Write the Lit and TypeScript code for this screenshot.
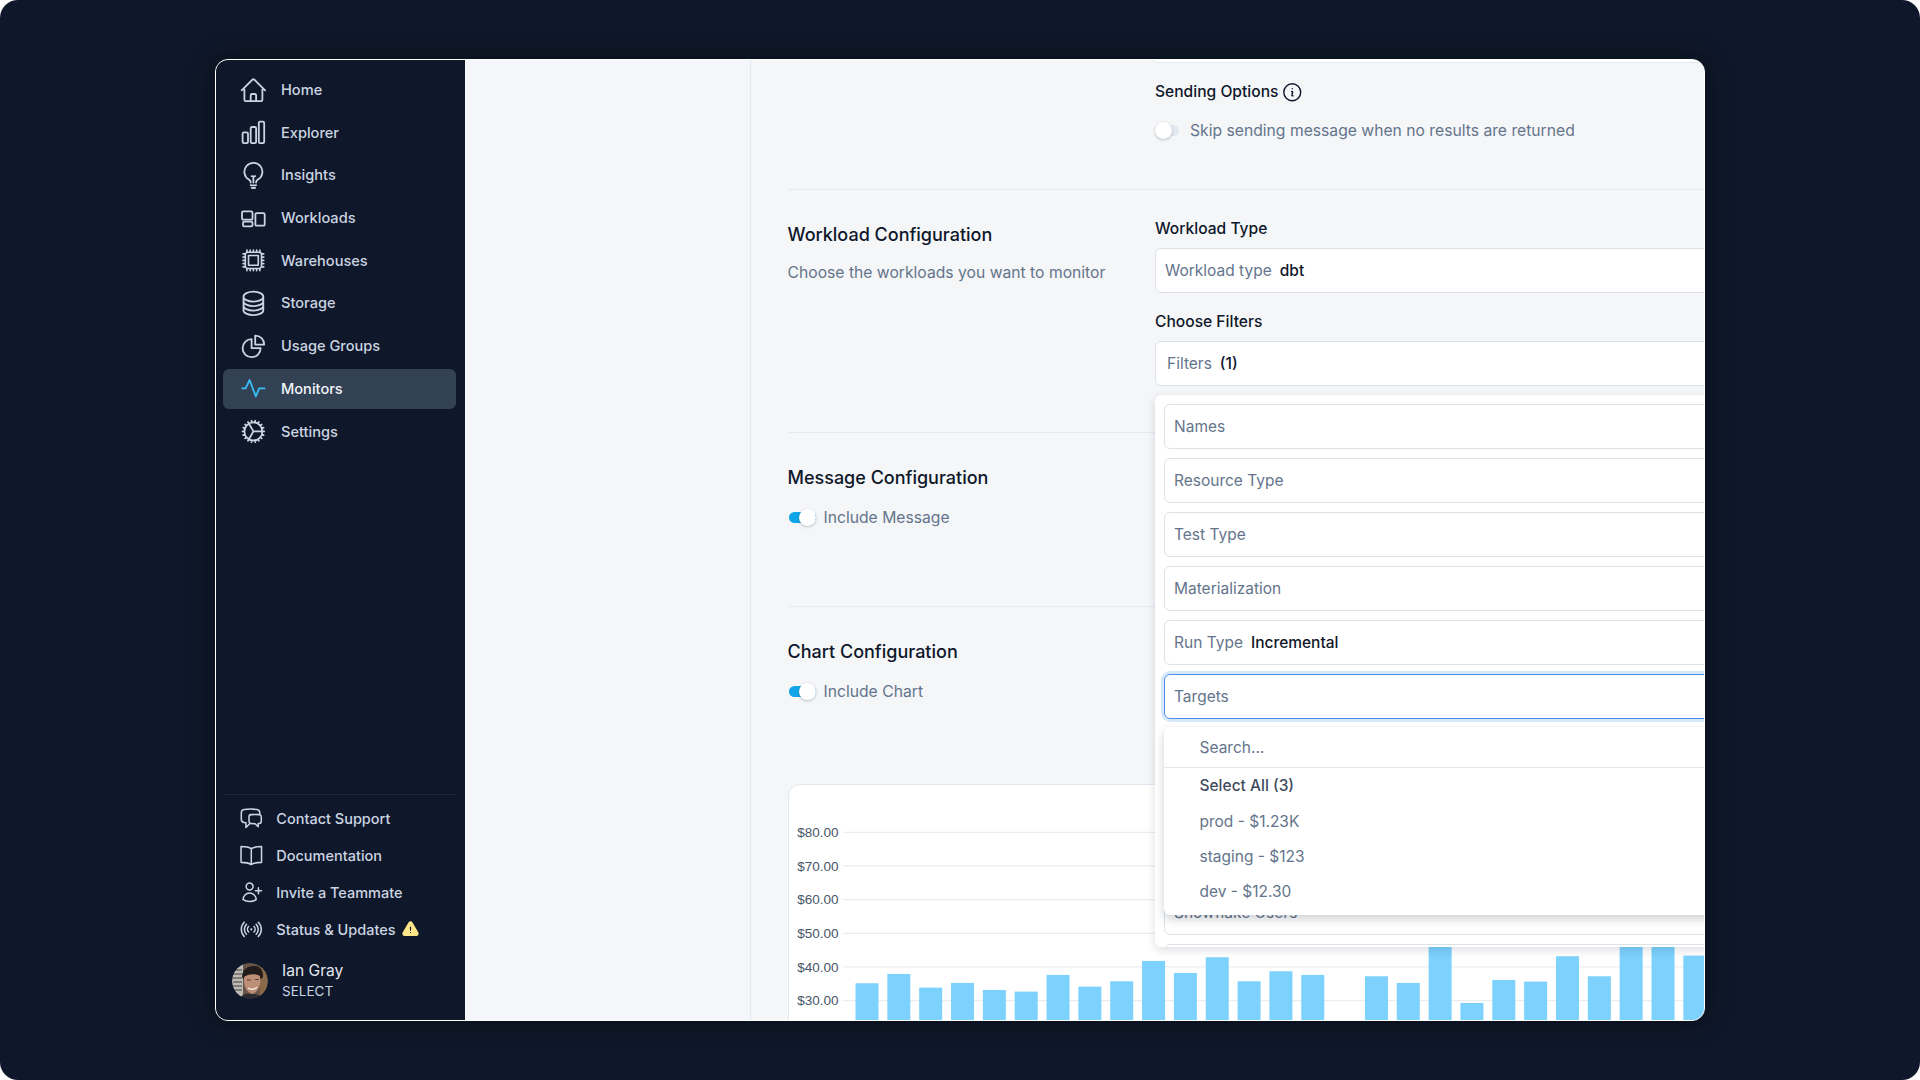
import { LitElement, html, css, svg } from "lit";
import { customElement } from "lit/decorators.js";

const P = (d: string) => svg`<path d=${d}></path>`;
const NAV_ICONS: Record<string, unknown> = {
  Home: P("M2.25 12l8.954-8.955a1.126 1.126 0 011.591 0L21.75 12M4.5 9.75v10.125c0 .621.504 1.125 1.125 1.125H9.75v-4.875c0-.621.504-1.125 1.125-1.125h2.25c.621 0 1.125.504 1.125 1.125V21h4.125c.621 0 1.125-.504 1.125-1.125V9.75M8.25 21h8.25"),
  Explorer: P("M3 13.125C3 12.504 3.504 12 4.125 12h2.25c.621 0 1.125.504 1.125 1.125v6.75C7.5 20.496 6.996 21 6.375 21h-2.25A1.125 1.125 0 013 19.875v-6.75zM9.75 8.625c0-.621.504-1.125 1.125-1.125h2.25c.621 0 1.125.504 1.125 1.125v11.25c0 .621-.504 1.125-1.125 1.125h-2.25a1.125 1.125 0 01-1.125-1.125V8.625zM16.5 4.125c0-.621.504-1.125 1.125-1.125h2.25C20.496 3 21 3.504 21 4.125v15.75c0 .621-.504 1.125-1.125 1.125h-2.25a1.125 1.125 0 01-1.125-1.125V4.125z"),
  Insights: P("M12 18v-5.25m0 0a6.01 6.01 0 001.5-.189m-1.5.189a6.01 6.01 0 01-1.5-.189m3.75 7.478a12.06 12.06 0 01-4.5 0m3.75 2.383a14.406 14.406 0 01-3 0M14.25 18v-.192c0-.983.658-1.823 1.508-2.316a7.5 7.5 0 10-7.517 0c.85.493 1.509 1.333 1.509 2.316V18"),
  Workloads: svg`<g transform="translate(2 2) scale(.8333)" stroke-width="1.8"><rect x="0.6" y="5" width="10.5" height="8.3" rx="1.3"></rect><rect x="1.6" y="15.3" width="9.5" height="4.7" rx="1.3"></rect><rect x="14" y="6.7" width="9.3" height="12.6" rx="1.3"></rect></g>`,
  Warehouses: svg`<g transform="translate(1.2 1.2) scale(.9)" stroke-width="1.5"><path d="M6 2.4v2.1M9 2.4v2.1M12 2.4v2.1M15 2.4v2.1M18 2.4v2.1M6 19.5v2.1M9 19.5v2.1M12 19.5v2.1M15 19.5v2.1M18 19.5v2.1M2.4 6h2.1M2.4 9h2.1M2.4 12h2.1M2.4 15h2.1M2.4 18h2.1M19.5 6h2.1M19.5 9h2.1M19.5 12h2.1M19.5 15h2.1M19.5 18h2.1M6.75 19.5h10.5a2.25 2.25 0 002.25-2.25V6.75a2.25 2.25 0 00-2.25-2.25H6.75A2.25 2.25 0 004.5 6.75v10.5a2.25 2.25 0 002.25 2.25zM7.5 7.5h9v9h-9v-9z"></path></g>`,
  Storage: P("M20.25 6.375c0 2.278-3.694 4.125-8.25 4.125S3.75 8.653 3.75 6.375m16.5 0c0-2.278-3.694-4.125-8.25-4.125S3.75 4.097 3.75 6.375m16.5 0v11.25c0 2.278-3.694 4.125-8.25 4.125s-8.25-1.847-8.25-4.125V6.375m16.5 0v3.75m-16.5-3.75v3.75m16.5 0v3.75C20.25 16.153 16.556 18 12 18s-8.25-1.847-8.25-4.125v-3.75m16.5 0c0 2.278-3.694 4.125-8.25 4.125s-8.25-1.847-8.25-4.125"),
  "Usage Groups": svg`<path d="M10.5 6a7.5 7.5 0 107.5 7.5h-7.5V6z"></path><path d="M13.5 10.5H21A7.5 7.5 0 0013.5 3v7.5z"></path>`,
  Monitors: svg`<g transform="translate(2 2) scale(.8333)" stroke-width="1.8"><path d="M.8 12H4.2L8.2 3.6 14.4 20 17.8 12H23.2"></path></g>`,
  Settings: P("M4.5 12a7.5 7.5 0 0015 0m-15 0a7.5 7.5 0 1115 0m-15 0H3m16.5 0H21m-1.5 0H12m-8.457 3.077l1.41-.513m14.095-5.13l1.41-.513M5.106 17.785l1.15-.964m11.49-9.642l1.149-.964M7.501 19.795l.75-1.3m7.5-12.99l.75-1.3m-6.063 16.658l.26-1.477m2.605-14.772l.26-1.477m0 17.726l-.26-1.477M10.698 4.614l-.26-1.477M16.5 19.794l-.75-1.299M7.5 4.205L12 12m6.894 5.785l-1.149-.964M6.256 7.178l-1.15-.964m15.352 8.864l-1.41-.513M4.954 9.435l-1.41-.514M12.002 12l-3.75 6.495"),
};
const FOOT_ICONS: Record<string, unknown> = {
  "Contact Support": P("M20.25 8.511c.884.284 1.5 1.128 1.5 2.097v4.286c0 1.136-.847 2.1-1.98 2.193-.34.027-.68.052-1.02.072v3.091l-3-3c-1.354 0-2.694-.055-4.02-.163a2.115 2.115 0 01-.825-.242m9.345-8.334a2.126 2.126 0 00-.476-.095 48.64 48.64 0 00-8.048 0c-1.131.094-1.976 1.057-1.976 2.192v4.286c0 .837.46 1.58 1.155 1.951m9.345-8.334V6.637c0-1.621-1.152-3.026-2.76-3.235A48.455 48.455 0 0011.25 3c-2.115 0-4.198.137-6.24.402-1.608.209-2.76 1.614-2.76 3.235v6.226c0 1.621 1.152 3.026 2.76 3.235.577.075 1.157.14 1.74.194V21l4.155-4.155"),
  Documentation: P("M12 5.6C10 4.1 6 3.4 2 3.4v15.5c4.2 0 7.4.5 10 2.1 2.6-1.6 5.8-2.1 10-2.1V3.4c-4 0-8 .7-10 2.2zM12 5.6V21"),
  "Invite a Teammate": P("M19 7.5v3m0 0v3m0-3h3m-3 0h-3m-2.25-4.125a3.375 3.375 0 11-6.75 0 3.375 3.375 0 016.75 0zM4 19.235v-.11a6.375 6.375 0 0112.75 0v.109A12.318 12.318 0 0110.374 21c-2.331 0-4.512-.645-6.374-1.766z"),
  "Status & Updates": P("M9.348 14.651a3.75 3.75 0 010-5.303m5.304 0a3.75 3.75 0 010 5.303m-7.425 2.122a6.75 6.75 0 010-9.546m9.546 0a6.75 6.75 0 010 9.546M5.106 18.894c-3.808-3.808-3.808-9.98 0-13.789m13.788 0c3.808 3.808 3.808 9.981 0 13.79M12 12h.008v.007H12V12zm.375 0a.375.375 0 11-.75 0 .375.375 0 01.75 0z"),
};

const BAR_TOPS: (number | null)[] = [761, 733, 774, 760, 781, 786, 736, 771, 755, 694, 730, 683, 755, 725, 736, null, 740, 760, 600, 820, 751, 756, 680, 740, 600, 600, 678];
const TICKS = [["$80.00", 832.7], ["$70.00", 866.3], ["$60.00", 900], ["$50.00", 933.7], ["$40.00", 967.3], ["$30.00", 1001]] as const;
const CARD_X = 788.5;
const CARD_Y = 785.4;

@customElement("app-root")
export class AppRoot extends LitElement {
  static styles = css`
    :host { display: block; width: 1920px; height: 1080px; font-family: Inter, "Noto Sans", sans-serif; background: #fff; }
    * { box-sizing: border-box; }
    .frame { width: 1920px; height: 1080px; border-radius: 18px; background: #0f182a; padding: 59px 215px; overflow: hidden; }
    .win { display: flex; width: 100%; height: 100%; border: 1px solid #fff; border-radius: 13px; overflow: hidden; box-shadow: 0 0 26px rgba(0, 0, 0, .5); background: #f4f6f8; }
    .side { flex: 0 0 249px; background: #0f172a; display: flex; flex-direction: column; padding: 10px 9px 0 6.5px; }
    .nav { display: flex; flex-direction: column; gap: 2.7px; }
    .item { display: flex; align-items: center; gap: 13.1px; height: 40px; padding-left: 16.6px; border-radius: 6px; color: #cbd5e1; font-size: 14.6px; font-weight: 500; }
    .item.active { background: #334155; color: #f1f5f9; }
    .ic { fill: none; stroke: currentColor; stroke-width: 1.5; stroke-linecap: round; stroke-linejoin: round; flex: none; }
    .item .ic { width: 28.8px; height: 28.8px; }
    .item.active .ic { stroke: #38bdf8; }
    .foot { margin-top: auto; border-top: 1.5px solid #1e293b; padding-top: 5.2px; }
    .fitem { display: flex; align-items: center; gap: 12.3px; height: 37px; padding-left: 16.9px; color: #cbd5e1; font-size: 14.5px; font-weight: 500; }
    .fitem .ic { width: 24.6px; height: 24.6px; }
    .warn { width: 19px; height: 19px; margin-left: -6.5px; fill: #fde68a; }
    .user { display: flex; align-items: center; gap: 14px; padding: 13.3px 0 19px 9.5px; }
    .avatar { width: 36px; height: 36px; border-radius: 50%; flex: none; }
    .uname { color: #e2e8f0; font-size: 15.6px; line-height: 20px; font-weight: 400; }
    .urole { color: #cbd5e1; font-size: 13.5px; line-height: 19px; margin-top: 1px; }
    .pane { flex: 0 0 286px; background: #f5f6fa; border-right: 1px solid #e2e8f0; }
    .main { flex: 1; min-width: 0; overflow: hidden; padding-left: 36.5px; background: #f4f6f8; }
    .content { width: 1100px; }
    .sec { display: grid; grid-template-columns: 367.5px 1fr; border-top: 1px solid #e6eaef; }
    .sec.first { border-top: 0; padding-bottom: 48.7px; }
    .sec.work { padding-top: 28px; padding-bottom: 45.3px; }
    .sec.msg { height: 174px; padding-top: 33px; }
    .sec.chart { padding-top: 33px; }
    .stub { height: 2.6px; background: #fff; border-bottom: 1px solid #e2e8f0; border-radius: 0 0 6px 6px; }
    .label { display: flex; align-items: center; gap: 3px; height: 20px; color: #0f172a; font-size: 15.6px; font-weight: 500; }
    .label .ic { width: 22.5px; height: 22.5px; }
    .send { margin-top: 19.2px; }
    .h { color: #0f172a; font-size: 18px; line-height: 24px; font-weight: 500; }
    .work .h { margin-top: 5px; }
    .desc { margin-top: 16px; color: #64748b; font-size: 15.7px; line-height: 20px; }
    .tog-row { display: flex; align-items: center; gap: 8px; height: 20px; margin-top: 18px; color: #64748b; font-size: 15.7px; }
    .send + .tog-row { margin-top: 19px; }
    .tog { position: relative; width: 27px; height: 11px; margin-left: 1px; border-radius: 6px; background: #0ea5e9; flex: none; }
    .tog::after { content: ""; position: absolute; right: 0; top: -3px; width: 17px; height: 17px; border-radius: 50%; background: #fff; box-shadow: 0 1px 3px rgba(15, 23, 42, .25); }
    .tog.off { width: 24px; margin-left: 0; background: #e2e8f0; }
    .tog.off::after { left: 0; right: auto; }
    .off-row { gap: 11px; }
    .field { display: flex; align-items: center; gap: 8px; height: 45px; padding-left: 9px; background: #fff; border: 1px solid #dde2e9; border-radius: 6px; color: #64748b; font-size: 15.5px; }
    .field b { color: #0f172a; font-weight: 500; }
    .fwrap { position: relative; }
    .f2 { margin-top: 9.8px; }
    .cf { margin-top: 18.3px; }
    .filters { padding-left: 11px; }
    .pop { position: absolute; z-index: 5; left: 0; right: 0; top: calc(100% + 8.6px); height: 552.3px; overflow: hidden; padding: 9.3px 0 0 9px; background: #fff; border-radius: 6px; box-shadow: 0 3px 10px rgba(15, 23, 42, .14); display: flex; flex-direction: column; gap: 9px; }
    .pop .field { flex: none; }
    .targets { position: relative; flex: none; }
    .targets .field { border-color: #4f8fe8; box-shadow: 0 0 0 3px #d8e8fb; }
    .dd { position: absolute; z-index: 6; left: 0; right: 0; top: 53px; height: 188px; background: #fff; border-radius: 6px; box-shadow: 0 4px 10px rgba(15, 23, 42, .2); font-size: 15.5px; color: #64748b; }
    .search { display: flex; align-items: center; height: 41px; padding-left: 35.5px; border-bottom: 1.5px solid #e2e8f0; }
    .opt { display: flex; align-items: center; height: 35.3px; padding-left: 35.5px; }
    .opt.all { color: #3f4c60; font-weight: 500; }
    .card { grid-column: 1 / -1; margin-top: 82.5px; height: 320px; background: #fff; border: 1px solid #e2e8f0; border-radius: 12px; }
    .card svg { display: block; }
    .tick { font-family: "Liberation Sans", Arial, sans-serif; font-size: 13.5px; fill: #475569; }
  `;

  private avatar() {
    return html`<svg class="avatar" viewBox="0 0 36 36">
      <defs>
        <clipPath id="av"><circle cx="18" cy="18" r="18"></circle></clipPath>
        <filter id="soft"><feGaussianBlur stdDeviation=".6"></feGaussianBlur></filter>
      </defs>
      <g clip-path="url(#av)"><g filter="url(#soft)">
        <rect width="36" height="36" fill="#6b5448"></rect>
        <rect width="11" height="36" fill="#bdbab4"></rect>
        <path d="M1 7h9M1 11h9M1 15h9M1 19h9M1 23h9M1 27h9" stroke="#6e6a66" stroke-width="1.4"></path>
        <rect x="28" y="0" width="8" height="36" fill="#8a6a48"></rect>
        <path d="M10 14C10 5 17 3 23 3c6 0 8 5 8 11l-2 2-17 1z" fill="#241c1a"></path>
        <path d="M12 14c3-3 12-4 16-1 1 7 0 14-7 18-6-1-10-8-9-17z" fill="#bd8f76"></path>
        <path d="M15 17h4M23 16.5h3.6" stroke="#5a4034" stroke-width="1.1"></path>
        <path d="M16 25c3 2 7 1.5 9-.8" stroke="#f1e6dc" stroke-width="1.5" fill="none"></path>
        <path d="M8 36c1-4 5-6 10-5 6 0 11 1 12 5z" fill="#2a2a30"></path>
      </g></g>
    </svg>`;
  }

  private chart() {
    const rows = TICKS.map(([t, y]) => svg`
      <text class="tick" x=${796.7 - CARD_X} y=${y - CARD_Y + 4.8}>${t}</text>
      <line x1=${842.6 - CARD_X} x2="1100" y1=${y - CARD_Y} y2=${y - CARD_Y} stroke="#e9edf2" stroke-width="1.2"></line>`);
    const bars = BAR_TOPS.map((top, i) => {
      if (top === null) return null;
      const y = 730 + top / 3 - CARD_Y;
      return svg`<rect x=${855 - CARD_X + i * 31.84} y=${y} width="23" height=${300 - y} fill="#7dd1fd"></rect>`;
    });
    return html`<svg width="1098" height="300" viewBox="0 0 1098 300">${rows}${bars}</svg>`;
  }

  render() {
    const names = Object.keys(NAV_ICONS);
    return html`<div class="frame"><div class="win">
      <aside class="side">
        <nav class="nav">
          ${names.map((n) => html`<div class="item ${n === "Monitors" ? "active" : ""}">
            <svg class="ic" viewBox="0 0 24 24">${NAV_ICONS[n]}</svg><span>${n}</span></div>`)}
        </nav>
        <div class="foot">
          ${Object.keys(FOOT_ICONS).map((n) => html`<div class="fitem">
            <svg class="ic" viewBox="0 0 24 24">${FOOT_ICONS[n]}</svg><span>${n}</span>
            ${n === "Status & Updates" ? html`<svg class="warn" viewBox="0 0 24 24"><path fill-rule="evenodd" d="M9.401 3.003c1.155-2 4.043-2.001 5.197 0l7.355 12.748c1.154 2-.29 4.5-2.599 4.5H4.645c-2.309 0-3.752-2.5-2.598-4.5L9.4 3.003zM12 8.25a.75.75 0 01.75.75v3.75a.75.75 0 01-1.5 0V9a.75.75 0 01.75-.75zm0 8.25a.75.75 0 100-1.5.75.75 0 000 1.5z"></path></svg>` : ""}
          </div>`)}
          <div class="user">${this.avatar()}<div><div class="uname">Ian Gray</div><div class="urole">SELECT</div></div></div>
        </div>
      </aside>
      <div class="pane"></div>
      <main class="main"><div class="content">
        <section class="sec first">
          <div></div>
          <div>
            <div class="stub"></div>
            <div class="label send">Sending Options
              <svg class="ic" viewBox="0 0 24 24"><path d="M11.25 11.25l.041-.02a.75.75 0 011.063.852l-.708 2.836a.75.75 0 001.063.853l.041-.021M21 12a9 9 0 11-18 0 9 9 0 0118 0zm-9-3.75h.008v.008H12V8.25z"></path></svg>
            </div>
            <div class="tog-row off-row"><span class="tog off"></span><span>Skip sending message when no results are returned</span></div>
          </div>
        </section>
        <section class="sec work">
          <div><div class="h">Workload Configuration</div><div class="desc">Choose the workloads you want to monitor</div></div>
          <div>
            <div class="label">Workload Type</div>
            <div class="field f2">Workload type <b>dbt</b></div>
            <div class="label cf">Choose Filters</div>
            <div class="fwrap">
              <div class="field f2 filters">Filters <b>(1)</b></div>
              <div class="pop">
                <div class="field">Names</div>
                <div class="field">Resource Type</div>
                <div class="field">Test Type</div>
                <div class="field">Materialization</div>
                <div class="field">Run Type <b>Incremental</b></div>
                <div class="targets">
                  <div class="field">Targets</div>
                  <div class="dd">
                    <div class="search">Search...</div>
                    <div class="opt all">Select All (3)</div>
                    <div class="opt">prod - $1.23K</div>
                    <div class="opt">staging - $123</div>
                    <div class="opt">dev - $12.30</div>
                  </div>
                </div>
                <div class="field"></div>
                <div class="field"></div>
                <div class="field"></div>
                <div class="field">Snowflake Users</div>
                <div class="field"></div>
              </div>
            </div>
          </div>
        </section>
        <section class="sec msg">
          <div><div class="h">Message Configuration</div>
            <div class="tog-row"><span class="tog"></span><span>Include Message</span></div></div>
          <div></div>
        </section>
        <section class="sec chart">
          <div><div class="h">Chart Configuration</div>
            <div class="tog-row"><span class="tog"></span><span>Include Chart</span></div></div>
          <div></div>
          <div class="card">${this.chart()}</div>
        </section>
      </div></main>
    </div></div>`;
  }
}
